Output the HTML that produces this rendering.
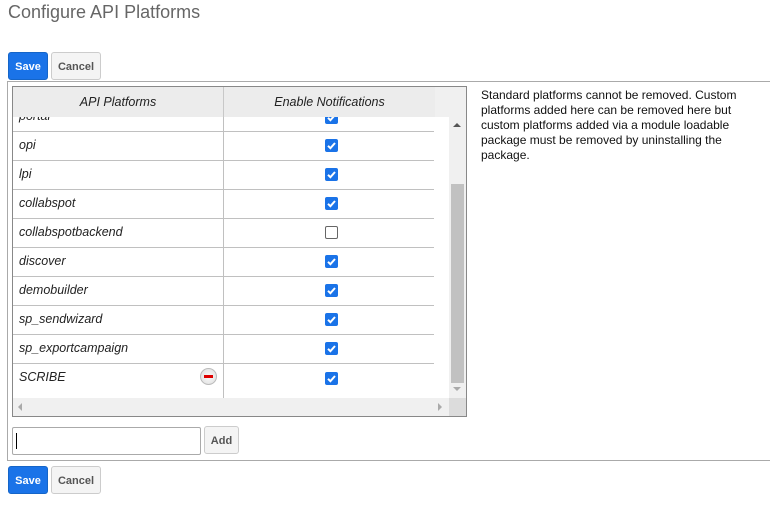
<!DOCTYPE html>
<html><head><meta charset="utf-8"><style>
*{box-sizing:border-box;margin:0;padding:0}
body{width:770px;height:508px;background:#fff;font-family:"Liberation Sans",Arial,sans-serif;position:relative;overflow:hidden;color:#333}
.a{position:absolute}
.btn{position:absolute;height:28px;border-radius:3px;font-size:11px;font-weight:bold;display:flex;align-items:center;justify-content:center;padding-top:1px}
.save{background:#1a73e8;color:#fff;border:1px solid #1565c8;width:40px}
.cancel{background:#f4f4f4;color:#555;border:1px solid #ccc;width:50px}
.row{position:absolute;left:13px;width:421px;height:29px;border-bottom:1px solid #c0c0c0}
.row span{position:absolute;left:6px;top:6px;font-size:12.5px;font-style:italic;color:#222}
.cb{position:absolute;left:312px;top:8px;width:13px;height:13px;border-radius:2px;background:#1a73e8}
.cb svg{position:absolute;left:0;top:0}
.cb.off{background:#fff;border:1px solid #666}
</style></head><body>
<div class="a" style="left:8px;top:2px;font-size:18px;color:#666">Configure API Platforms</div>
<div class="btn save" style="left:8px;top:52px">Save</div>
<div class="btn cancel" style="left:51px;top:52px">Cancel</div>
<div class="a" style="left:7px;top:81px;width:770px;height:380px;border:1px solid #aaa;border-right:none"></div>
<div class="a" style="left:481px;top:88px;width:285px;font-size:12px;line-height:15px;color:#111">Standard platforms cannot be removed. Custom platforms added here can be removed here but custom platforms added via a module loadable package must be removed by uninstalling the package.</div>
<div class="a" style="left:12px;top:86px;width:455px;height:331px;border:1px solid #888;overflow:hidden;background:#fff">
 <div class="a" style="left:0;top:0;width:453px;height:30px;background:#f0f0f0"></div>
 <div class="a" style="left:0;top:0;width:422px;height:30px;background:#ececec;z-index:2"></div>
 <div class="a" style="left:0;top:0;width:210px;height:30px;text-align:center;line-height:30px;font-size:12.5px;font-style:italic;color:#222;z-index:3">API Platforms</div>
 <div class="a" style="left:210px;top:0;width:212px;height:30px;text-align:center;line-height:30px;font-size:12.5px;font-style:italic;color:#222;z-index:3;border-left:1px solid #c8c8c8">Enable Notifications</div>
 <div class="a" style="left:210px;top:0;width:1px;height:311px;background:#c0c0c0;z-index:1"></div>
 <div class="a" style="left:436px;top:30px;width:17px;height:281px;background:#f0f0f0"></div>
 <div class="a" style="left:438px;top:97px;width:13px;height:199px;background:#c1c1c1"></div>
 <div class="a" style="left:440px;top:36px;border:4px solid transparent;border-bottom:4px solid #555;border-top:none;width:0;height:0"></div>
 <div class="a" style="left:440px;top:300px;border:4px solid transparent;border-top:4px solid #aaa;border-bottom:none;width:0;height:0"></div>
 <div class="a" style="left:0;top:311px;width:436px;height:18px;background:#f0f0f0"></div>
 <div class="a" style="left:436px;top:311px;width:17px;height:18px;background:#dcdcdc"></div>
 <div class="a" style="left:5px;top:316px;border:4px solid transparent;border-right:4px solid #aaa;border-left:none;width:0;height:0"></div>
 <div class="a" style="left:425px;top:316px;border:4px solid transparent;border-left:4px solid #aaa;border-right:none;width:0;height:0"></div>
</div>
<div id="rows"></div>
<div class="a" style="left:12px;top:427px;width:189px;height:28px;border:1px solid #aaa;border-radius:2px"></div>
<div class="a" style="left:16px;top:433px;width:1px;height:16px;background:#000"></div>
<div class="btn cancel" style="left:204px;top:426px;width:35px;height:28px">Add</div>
<div class="btn save" style="left:8px;top:466px">Save</div>
<div class="btn cancel" style="left:51px;top:466px">Cancel</div>
<script>
var names=["opi","lpi","collabspot","collabspotbackend","discover","demobuilder","sp_sendwizard","sp_exportcampaign","SCRIBE"];
var chk='<svg width="13" height="13" viewBox="0 0 13 13"><path d="M3 6.8 L5.4 9.2 L10 4" stroke="#fff" stroke-width="2" fill="none"/></svg>';
var h='<div class="row" style="top:116px;height:16px;overflow:hidden;z-index:0"><span style="top:-7px">portal</span><div class="cb" style="top:-5px">'+chk+'</div></div>';
names.forEach(function(n,i){var top=132+i*29;var hh=i==8?34:29;
h+='<div class="row" style="top:'+top+'px;height:'+hh+'px;'+(i==8?'border-bottom:none':'')+'"><span>'+n+'</span><div class="cb'+(i==3?' off':'')+'" style="top:'+(i==8?8:7)+'px">'+(i==3?'':chk)+'</div>'+(i==8?'<div style="position:absolute;left:187px;top:4px;width:17px;height:17px;border-radius:50%;background:radial-gradient(#fafafa,#ddd);border:1px solid #bbb"><div style="position:absolute;left:3px;top:6px;width:9px;height:3px;background:#d00"></div></div>':'')+'</div>';});
document.getElementById('rows').innerHTML=h;
</script>
</body></html>
